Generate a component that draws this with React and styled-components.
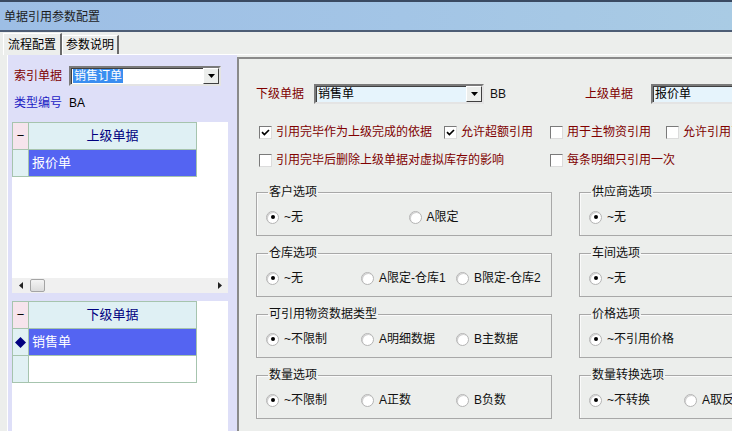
import React from "react";
import styled, { createGlobalStyle } from "styled-components";

const GlobalStyle = createGlobalStyle`
  html, body {
    margin: 0;
    padding: 0;
    overflow: hidden;
    background: #eceeec;
  }
  body {
    font-family: "Liberation Sans", "Noto Sans CJK SC", sans-serif;
    font-size: 12px;
    color: #000;
  }
`;

const Window = styled.div`
  width: 732px;
  height: 431px;
  overflow: hidden;
  background: #eceeec;
  display: flex;
  flex-direction: column;
`;

const TitleBar = styled.div`
  flex: none;
  height: 27px;
  border-top: 2px solid #3a4a62;
  border-bottom: 2px solid #4d5d75;
  background: linear-gradient(to right, #9dbee5, #a3c5e6 55%, #a9cbe4);
  display: flex;
  align-items: center;
  padding: 1px 0 0 4px;
  color: #1c1c1c;
  line-height: 14px;
`;

const TabStrip = styled.div`
  flex: none;
  height: 22px;
  display: flex;
  align-items: flex-end;
  padding-left: 3px;
`;

const Tab = styled.div`
  position: relative;
  z-index: ${(p) => (p.$active ? 2 : 1)};
  height: ${(p) => (p.$active ? "22px" : "19px")};
  margin-bottom: ${(p) => (p.$active ? "-1px" : "0")};
  padding: 0 ${(p) => (p.$active ? "4px" : "3px")};
  display: flex;
  align-items: center;
  box-sizing: border-box;
  background: #eceeec;
  border-top: 1px solid #fff;
  border-left: 1px solid #fff;
  border-right: 2px solid #6a6a6a;
  line-height: 14px;
`;

const TabPage = styled.div`
  flex: 1;
  min-height: 0;
  display: flex;
  margin-left: 7px;
  border-top: 1px solid #fff;
  border-left: 1px solid #fff;
`;

const LeftPanel = styled.div`
  flex: none;
  width: 229px;
  background: #dedff8;
  padding: 11px 0 0 4px;
  box-sizing: border-box;
  display: flex;
  flex-direction: column;
`;

const FieldRow = styled.div`
  display: flex;
  align-items: center;
  height: ${(p) => p.$h || 20}px;
  margin-bottom: ${(p) => p.$mb || 0}px;
  padding-left: ${(p) => p.$pl || 0}px;
`;

const Label = styled.span`
  flex: none;
  width: ${(p) => p.$w}px;
  padding-left: ${(p) => p.$pl || 0}px;
  color: ${(p) => p.$color || "#800000"};
  line-height: 14px;
  white-space: nowrap;
`;

const Combo = styled.div`
  flex: none;
  width: ${(p) => p.$w}px;
  height: 20px;
  box-sizing: border-box;
  display: flex;
  align-items: center;
  background: ${(p) => p.$bg || "#fff"};
  border: 2px solid;
  border-color: #7a7a7a #e4e4e4 #e4e4e4 #7a7a7a;
  box-shadow: inset 1px 1px 0 #404040;
  padding-left: 2px;
  line-height: 14px;
`;

const ComboText = styled.span`
  flex: 1;
  white-space: nowrap;
  overflow: hidden;
`;

const Selected = styled.span`
  background: #3a8ef0;
  color: #fff;
  padding: 0 1px;
`;

const DropButton = styled.div`
  flex: none;
  width: 16px;
  height: 16px;
  box-sizing: border-box;
  background: #eceeec;
  border: 1px solid;
  border-color: #fff #404040 #404040 #fff;
  display: flex;
  align-items: center;
  justify-content: center;
`;

const Arrow = () => (
  <svg width="7" height="4" viewBox="0 0 7 4">
    <path d="M0 0H7L3.5 4Z" fill="#000" />
  </svg>
);

const GridArea = styled.div`
  width: 216px;
  height: ${(p) => (p.$h ? `${p.$h}px` : "auto")};
  flex: ${(p) => (p.$h ? "none" : "1")};
  background: #fff;
  display: flex;
  flex-direction: column;
  margin-bottom: ${(p) => p.$mb || 0}px;
`;

const Table = styled.div`
  display: grid;
  grid-template-columns: 16px 168px;
  grid-auto-rows: 27px;
  border-top: 1px solid #a6c4ae;
  border-left: 1px solid #a6c4ae;
  align-self: flex-start;
`;

const Cell = styled.div`
  border-right: 1px solid #a6c4ae;
  border-bottom: 1px solid #a6c4ae;
  display: flex;
  align-items: center;
  justify-content: ${(p) => (p.$center ? "center" : "flex-start")};
  padding-left: ${(p) => (p.$center ? 0 : 3)}px;
  background: ${(p) =>
    p.$kind === "corner"
      ? "#f6e4ec"
      : p.$kind === "head"
      ? "#dff0f4"
      : p.$kind === "ind"
      ? "#e1f1f4"
      : p.$kind === "sel"
      ? "#5464f2"
      : "#fff"};
  color: ${(p) =>
    p.$kind === "sel" ? "#fff" : p.$kind === "head" ? "#000080" : "#000"};
  font-size: 13px;
  line-height: 14px;
`;

const Spacer = styled.div`
  flex: 1;
`;

const HScroll = styled.div`
  flex: none;
  height: 15px;
  background: #f0f0f0;
  display: flex;
  align-items: center;
`;

const ScrollArrow = styled.div`
  width: 17px;
  height: 15px;
  display: flex;
  align-items: center;
  justify-content: center;
`;

const Thumb = styled.div`
  width: 15px;
  height: 13px;
  box-sizing: border-box;
  border: 1px solid #a4a4a4;
  border-radius: 2px;
  background: linear-gradient(#f4f4f4, #dcdcdc);
  margin-left: 1px;
`;

const RightPanel = styled.div`
  flex: 1;
  min-width: 0;
  overflow: hidden;
  margin-top: 2px;
  border-top: 2px solid #8a8a8a;
  border-left: 2px solid #8a8a8a;
  padding: 25px 0 0 17px;
`;

const Inner = styled.div`
  width: 640px;
`;

const CheckRow = styled.div`
  display: flex;
  align-items: center;
  height: 20px;
  padding-left: 3px;
  margin-top: ${(p) => p.$mt || 0}px;
`;

const CheckItem = styled.label`
  flex: none;
  width: ${(p) => p.$w}px;
  display: flex;
  align-items: center;
  gap: 4px;
  color: #800000;
  line-height: 14px;
  white-space: nowrap;
`;

const Box = styled.span`
  flex: none;
  width: 13px;
  height: 13px;
  box-sizing: border-box;
  background: #fff;
  border: 1px solid;
  border-color: #7a7a7a #dcdcdc #dcdcdc #7a7a7a;
  display: flex;
  align-items: center;
  justify-content: center;
`;

const Check = ({ on, w, children }) => (
  <CheckItem $w={w}>
    <Box>
      {on && (
        <svg width="9" height="9" viewBox="0 0 9 9">
          <path d="M1 4.2L3.4 6.6L8 2" fill="none" stroke="#000" strokeWidth="1.7" />
        </svg>
      )}
    </Box>
    {children}
  </CheckItem>
);

const Groups = styled.div`
  display: grid;
  grid-template-columns: 296px 296px;
  column-gap: 27px;
  row-gap: 10px;
  margin-top: 15px;
`;

const GroupBox = styled.fieldset`
  margin: 0;
  min-width: 0;
  padding: 10px 0 10px 9px;
  border: 1px solid #a8a8a8;
  box-shadow: inset 1px 1px 0 #fafafa;
`;

const Legend = styled.legend`
  padding: 0 1px;
  margin-left: 2px;
  line-height: 14px;
  color: #111;
`;

const Options = styled.div`
  display: grid;
  grid-template-columns: repeat(${(p) => p.$n}, 1fr);
  height: 16px;
  align-items: center;
`;

const RadioItem = styled.span`
  display: flex;
  align-items: center;
  gap: 5px;
  white-space: nowrap;
  line-height: 14px;
  color: #111;
`;

const Dot = styled.span`
  flex: none;
  width: 13px;
  height: 13px;
  box-sizing: border-box;
  border-radius: 50%;
  background: #fff;
  border: 1px solid #b4b4b4;
  box-shadow: inset 1px 1px 0 #d0d0d0;
  display: flex;
  align-items: center;
  justify-content: center;
  &::after {
    content: "";
    width: 4px;
    height: 4px;
    border-radius: 50%;
    background: ${(p) => (p.$on ? "#000" : "transparent")};
  }
`;

const Group = ({ title, options }) => (
  <GroupBox>
    <Legend>{title}</Legend>
    <Options $n={options.length}>
      {options.map((o, i) => (
        <RadioItem key={o}>
          <Dot $on={i === 0} />
          {o}
        </RadioItem>
      ))}
    </Options>
  </GroupBox>
);

const groups = [
  ["客户选项", ["~无", "A限定"]],
  ["供应商选项", ["~无", "A限定"]],
  ["仓库选项", ["~无", "A限定-仓库1", "B限定-仓库2"]],
  ["车间选项", ["~无", "A限定"]],
  ["可引用物资数据类型", ["~不限制", "A明细数据", "B主数据"]],
  ["价格选项", ["~不引用价格", "A引用价格"]],
  ["数量选项", ["~不限制", "A正数", "B负数"]],
  ["数量转换选项", ["~不转换", "A取反", "B绝对值"]],
];

const Diamond = () => (
  <svg width="11" height="11" viewBox="0 0 11 11">
    <path d="M5.5 0L11 5.5L5.5 11L0 5.5Z" fill="#000080" />
  </svg>
);

export default function App() {
  return (
    <Window>
      <GlobalStyle />
      <TitleBar>单据引用参数配置</TitleBar>
      <TabStrip>
        <Tab $active>流程配置</Tab>
        <Tab>参数说明</Tab>
      </TabStrip>
      <TabPage>
        <LeftPanel>
          <FieldRow $pl={2} $mb={7}>
            <Label $w={55}>索引单据</Label>
            <Combo $w={152}>
              <ComboText>
                <Selected>销售订单</Selected>
              </ComboText>
              <DropButton>
                <Arrow />
              </DropButton>
            </Combo>
          </FieldRow>
          <FieldRow $pl={2} $mb={9}>
            <Label $w={55} $color="#1c1cc4">类型编号</Label>
            <span>BA</span>
          </FieldRow>
          <GridArea $h={171} $mb={8}>
            <Table>
              <Cell $kind="corner" $center>−</Cell>
              <Cell $kind="head" $center>上级单据</Cell>
              <Cell $kind="ind" />
              <Cell $kind="sel">报价单</Cell>
            </Table>
            <Spacer />
            <HScroll>
              <ScrollArrow>
                <svg width="4" height="7" viewBox="0 0 4 7">
                  <path d="M4 0V7L0 3.5Z" fill="#222" />
                </svg>
              </ScrollArrow>
              <Thumb />
              <Spacer />
              <ScrollArrow>
                <svg width="4" height="7" viewBox="0 0 4 7">
                  <path d="M0 0V7L4 3.5Z" fill="#222" />
                </svg>
              </ScrollArrow>
            </HScroll>
          </GridArea>
          <GridArea>
            <Table>
              <Cell $kind="corner" $center>−</Cell>
              <Cell $kind="head" $center>下级单据</Cell>
              <Cell $kind="ind" $center>
                <Diamond />
              </Cell>
              <Cell $kind="sel">销售单</Cell>
              <Cell $kind="ind" />
              <Cell />
            </Table>
          </GridArea>
        </LeftPanel>
        <RightPanel>
          <Inner>
            <FieldRow>
              <Label $w={58}>下级单据</Label>
              <Combo $w={170} $bg="#e6f4fc">
                <ComboText>销售单</ComboText>
                <DropButton>
                  <Arrow />
                </DropButton>
              </Combo>
              <Label $w={95} $pl={6} $color="#111">BB</Label>
              <Label $w={66}>上级单据</Label>
              <Combo $w={170} $bg="#e6f4fc">
                <ComboText>报价单</ComboText>
                <DropButton>
                  <Arrow />
                </DropButton>
              </Combo>
            </FieldRow>
            <CheckRow $mt={18}>
              <Check on w={185}>引用完毕作为上级完成的依据</Check>
              <Check on w={106}>允许超额引用</Check>
              <Check w={116}>用于主物资引用</Check>
              <Check w={140}>允许引用已审核单据</Check>
            </CheckRow>
            <CheckRow $mt={8}>
              <Check w={291}>引用完毕后删除上级单据对虚拟库存的影响</Check>
              <Check w={160}>每条明细只引用一次</Check>
            </CheckRow>
            <Groups>
              {groups.map(([t, o]) => (
                <Group key={t} title={t} options={o} />
              ))}
            </Groups>
          </Inner>
        </RightPanel>
      </TabPage>
    </Window>
  );
}
